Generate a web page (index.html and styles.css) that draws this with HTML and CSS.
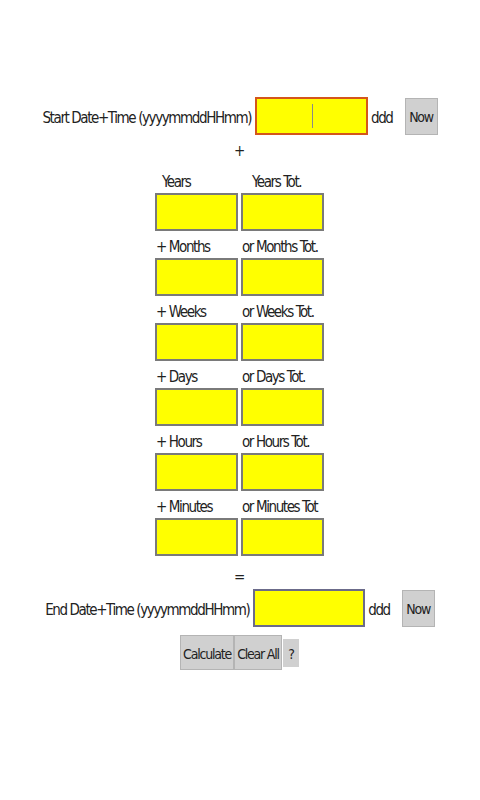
FILE: index.html
```html
<!DOCTYPE html>
<html>
<head>
<meta charset="utf-8">
<link rel="stylesheet" href="styles.css">
</head>
<body>
<div class="page">
  <div class="dt-row">
    <span class="dt-label">Start Date+Time (yyyymmddHHmm)</span>
    <div class="field field-wide field-focus"><span class="caret"></span></div>
    <span class="ddd">ddd</span>
    <button class="btn btn-now">Now</button>
  </div>
  <div class="op">+</div>
  <div class="grid">
    <div class="cell"><div class="lbl lbl-indent">Years</div><div class="field"></div></div>
    <div class="cell"><div class="lbl lbl-indent2">Years Tot.</div><div class="field"></div></div>
    <div class="cell"><div class="lbl">+ Months</div><div class="field"></div></div>
    <div class="cell"><div class="lbl">or Months Tot.</div><div class="field"></div></div>
    <div class="cell"><div class="lbl">+ Weeks</div><div class="field"></div></div>
    <div class="cell"><div class="lbl">or Weeks Tot.</div><div class="field"></div></div>
    <div class="cell"><div class="lbl">+ Days</div><div class="field"></div></div>
    <div class="cell"><div class="lbl">or Days Tot.</div><div class="field"></div></div>
    <div class="cell"><div class="lbl">+ Hours</div><div class="field"></div></div>
    <div class="cell"><div class="lbl">or Hours Tot.</div><div class="field"></div></div>
    <div class="cell"><div class="lbl">+ Minutes</div><div class="field"></div></div>
    <div class="cell"><div class="lbl">or Minutes Tot</div><div class="field"></div></div>
  </div>
  <div class="op op-eq">=</div>
  <div class="dt-row">
    <span class="dt-label">End Date+Time (yyyymmddHHmm)</span>
    <div class="field field-wide field-end"></div>
    <span class="ddd">ddd</span>
    <button class="btn btn-now">Now</button>
  </div>
  <div class="actions">
    <button class="btn btn-act">Calculate</button>
    <button class="btn btn-act">Clear All</button>
    <button class="btn btn-help">?</button>
  </div>
</div>
</body>
</html>
```
FILE: styles.css
```css
html, body {
  margin: 0;
  padding: 0;
  background: #ffffff;
}
body {
  font-family: "DejaVu Sans", sans-serif;
  font-stretch: condensed;
  font-size: 15px;
  letter-spacing: -1.4px;
  color: #222222;
}
.page {
  padding-top: 97px;
  display: flex;
  flex-direction: column;
  align-items: center;
}
.dt-row {
  display: flex;
  align-items: center;
  height: 38px;
}
.dt-label {
  margin-right: 4px;
  padding-top: 4px;
  white-space: nowrap;
}
.field {
  box-sizing: border-box;
  height: 38px;
  background: #ffff00;
  border: 2px solid #7a7a7a;
}
.field-wide {
  width: 113px;
  position: relative;
}
.field-focus {
  border-color: #d4561a;
}
.field-end {
  width: 112px;
  border-color: #6b6b8a;
}
.caret {
  position: absolute;
  left: 55px;
  top: 5px;
  width: 1px;
  height: 24px;
  background: #8a8a8a;
}
.ddd {
  margin-left: 3px;
  margin-right: 12px;
  padding-top: 4px;
}
.btn {
  box-sizing: border-box;
  font-family: inherit;
  font-stretch: condensed;
  font-size: 14px;
  letter-spacing: -1.2px;
  color: #222222;
  background: #d0d0d0;
  border: 1px solid #b4b4b4;
  padding: 0;
  margin: 0;
  border-radius: 0;
}
.btn-now {
  width: 33px;
  height: 37px;
  padding-top: 2px;
}
.op {
  height: 33px;
  line-height: 33px;
  width: 10px;
  text-align: center;
  margin-left: -2px;
}
.op-eq {
  box-sizing: border-box;
  height: 31px;
  padding-top: 7px;
  line-height: 25px;
}
.grid {
  display: grid;
  grid-template-columns: 83px 83px;
  column-gap: 3px;
  margin-left: -1px;
}
.cell {
  display: flex;
  flex-direction: column;
  padding-bottom: 2px;
}
.lbl {
  box-sizing: border-box;
  height: 25px;
  padding-top: 3px;
  line-height: 22px;
  white-space: nowrap;
  padding-left: 1px;
}
.lbl-indent {
  padding-left: 7px;
}
.lbl-indent2 {
  padding-left: 11px;
}
.cell .field {
  height: 38px;
}
.actions {
  display: flex;
  align-items: center;
  margin-top: 8px;
  margin-left: -1px;
}
.btn-act {
  height: 35px;
  padding: 2px 2px 0;
}
.btn-help {
  width: 16px;
  height: 28px;
  margin-left: 1px;
  padding-top: 2px;
  border-color: #d0d0d0;
}
```
